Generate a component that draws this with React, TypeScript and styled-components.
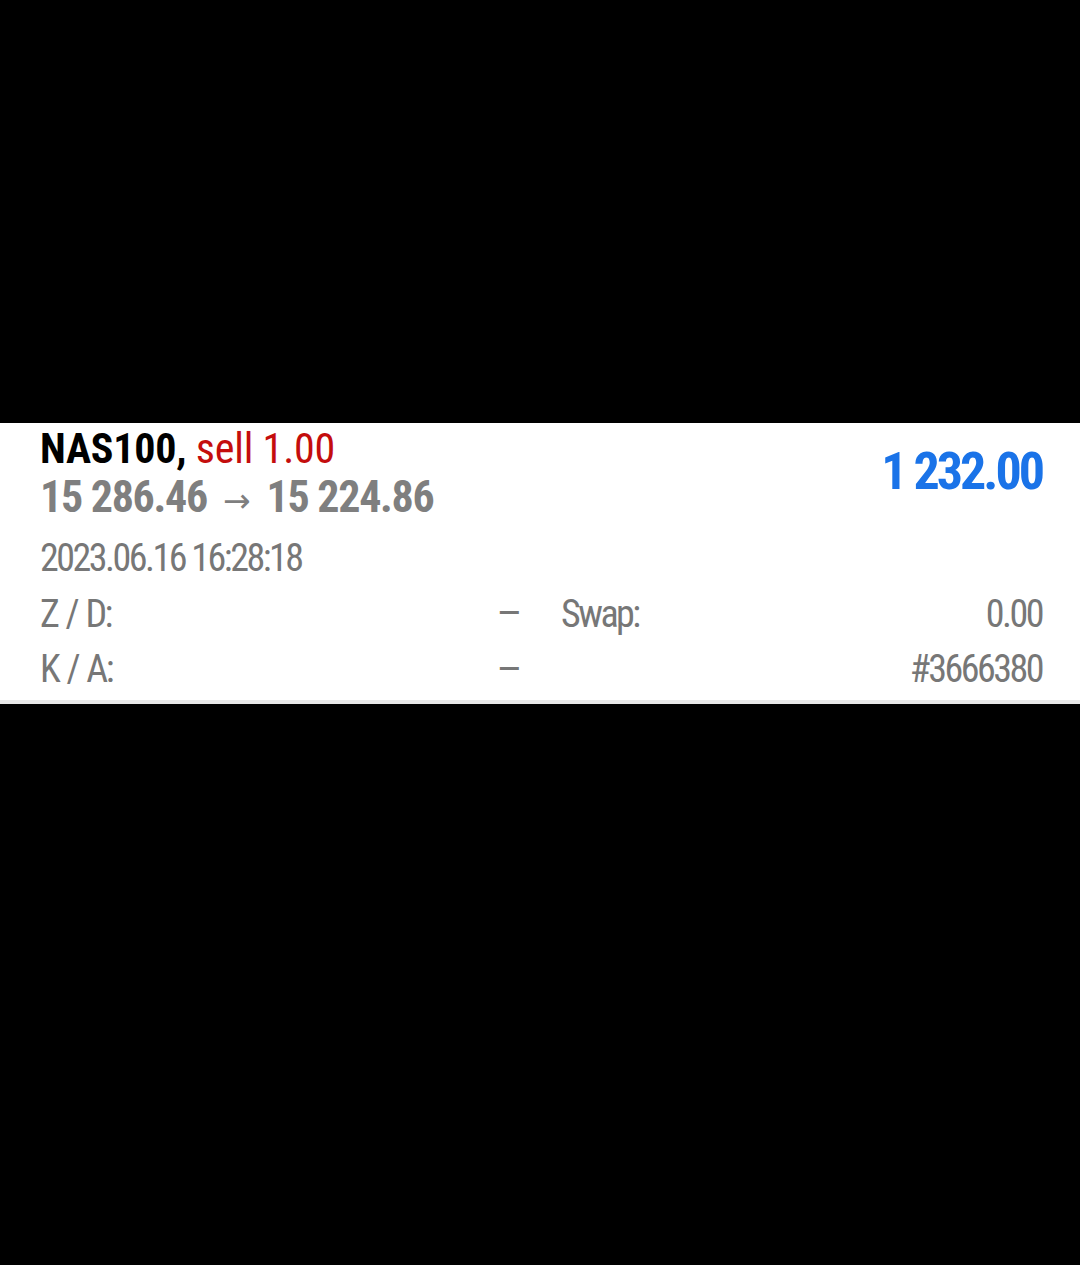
import React from "react";
import styled, { createGlobalStyle } from "styled-components";

const GlobalStyle = createGlobalStyle`
  html, body {
    margin: 0;
    background: #000;
  }
  body {
    font-family: "Roboto Condensed", Roboto, "Liberation Sans", sans-serif;
  }
`;

const Screen = styled.div`
  min-height: 1265px;
  background: #000;
  padding-top: 423px;
  box-sizing: border-box;
`;

const Card = styled.div`
  background: #fff;
  padding: 1px 38px 3px 40px;
  border-bottom: 4px solid #e8e8e8;
`;

const Head = styled.div`
  display: flex;
  justify-content: space-between;
  align-items: flex-start;
`;

const Title = styled.div`
  font-size: 42px;
  line-height: 49px;
  letter-spacing: -0.2px;
  white-space: nowrap;
`;

const Symbol = styled.span`
  color: #000;
  font-weight: 700;
`;

const Side = styled.span`
  color: #c40d0d;
`;

const Prices = styled.div`
  font-size: 44px;
  line-height: 49px;
  font-weight: 700;
  letter-spacing: -1.3px;
  color: #7f7f7f;
  white-space: nowrap;
`;

const Arrow = styled.span`
  font-family: "DejaVu Sans", sans-serif;
  font-weight: 400;
  font-size: 33px;
  letter-spacing: 0;
  margin: 0 16px 0 16px;
`;

const Profit = styled.div`
  margin-top: 18px;
  font-size: 52px;
  line-height: 60px;
  font-weight: 700;
  letter-spacing: -3px;
  color: #1a73e8;
  white-space: nowrap;
`;

const DateRow = styled.div`
  margin-top: 5px;
  font-size: 38px;
  line-height: 56px;
  letter-spacing: -2.5px;
  color: #777;
`;

const Details = styled.div`
  display: grid;
  grid-template-columns: 1fr 1fr;
  column-gap: 40px;
  font-size: 38px;
  letter-spacing: -2.5px;
  color: #777;
`;

const Field = styled.div<{ $h: number }>`
  display: flex;
  justify-content: space-between;
  line-height: ${(p) => p.$h}px;
`;

const Label = styled.span`
  word-spacing: 2px;
`;

const Value = styled.span`
  text-align: right;
`;

const Dash = styled(Value)`
  font-size: 40px;
  letter-spacing: 0;
  transform: scaleX(1.15);
`;

export default function App() {
  return (
    <>
      <GlobalStyle />
      <Screen>
        <Card>
          <Head>
            <div>
              <Title>
                <Symbol>NAS100,</Symbol> <Side>sell 1.00</Side>
              </Title>
              <Prices>
                15 286.46<Arrow>→</Arrow>15 224.86
              </Prices>
            </div>
            <Profit>1 232.00</Profit>
          </Head>
          <DateRow>2023.06.16 16:28:18</DateRow>
          <Details>
            <Field $h={56}>
              <Label>Z / D:</Label>
              <Dash>–</Dash>
            </Field>
            <Field $h={56}>
              <Label>Swap:</Label>
              <Value>0.00</Value>
            </Field>
            <Field $h={55}>
              <Label>K / A:</Label>
              <Dash>–</Dash>
            </Field>
            <Field $h={55}>
              <Label />
              <Value>#3666380</Value>
            </Field>
          </Details>
        </Card>
      </Screen>
    </>
  );
}
